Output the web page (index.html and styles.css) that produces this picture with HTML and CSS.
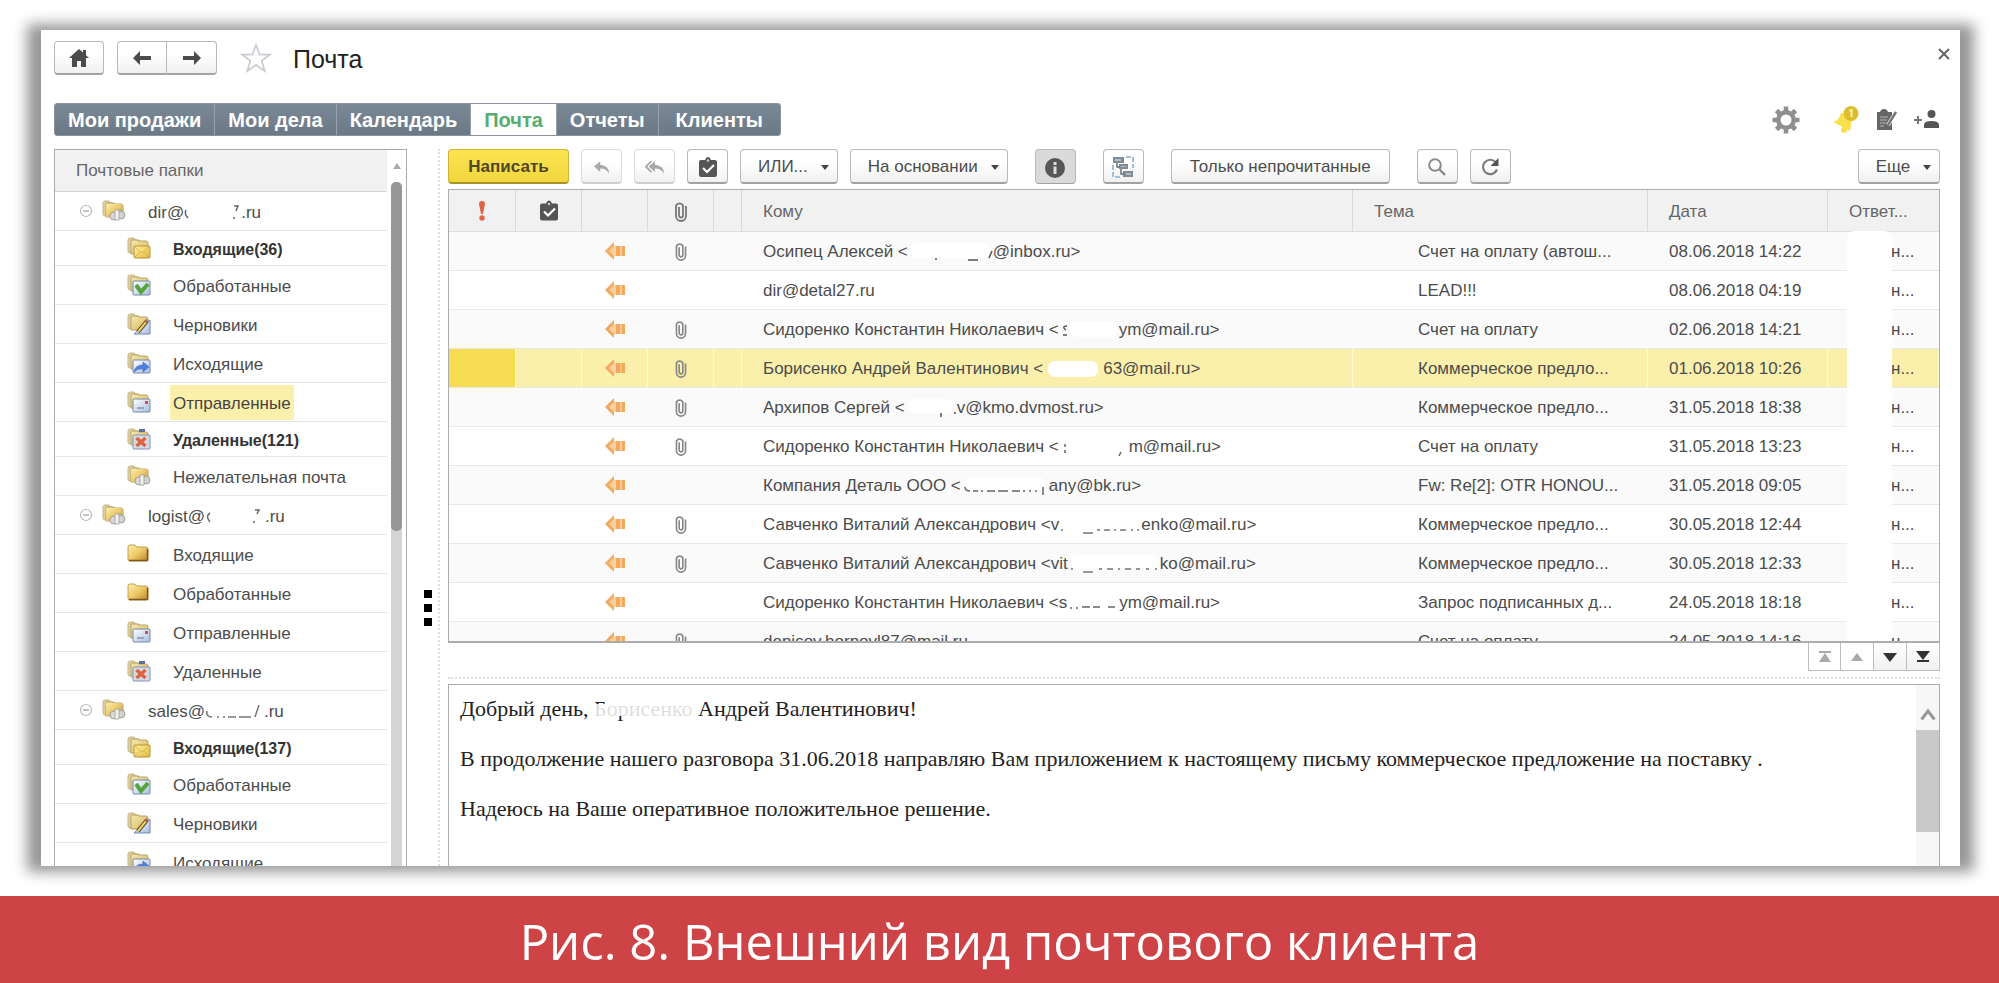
FILE: index.html
```html
<!DOCTYPE html>
<html lang="ru">
<head>
<meta charset="utf-8">
<title>Почта</title>
<link rel="stylesheet" href="styles.css">
</head>
<body>
<svg class="sprite" aria-hidden="true">
  <defs>
    <linearGradient id="gold" x1="0" y1="0" x2="1" y2="1"><stop offset="0" stop-color="#fdf0a8"/><stop offset=".5" stop-color="#efc969"/><stop offset="1" stop-color="#b98526"/></linearGradient>
    <linearGradient id="pale" x1="0" y1="0" x2="1" y2="1"><stop offset="0" stop-color="#f6e9b0"/><stop offset=".6" stop-color="#e3cb7c"/><stop offset="1" stop-color="#c9a64c"/></linearGradient>
    <linearGradient id="paper" x1="0" y1="0" x2="1" y2="1"><stop offset="0" stop-color="#ffffff"/><stop offset="1" stop-color="#a9bfe0"/></linearGradient>
    <linearGradient id="mail" x1="0" y1="0" x2="1" y2="1"><stop offset="0" stop-color="#fff3a6"/><stop offset="1" stop-color="#e2b83c"/></linearGradient>
    <symbol id="folder" viewBox="0 0 24 22"><path d="M1 4q0-2 2-2h5l2 2h9q2 0 2 2v10q0 2-2 2H3q-2 0-2-2z" fill="url(#gold)" stroke="#c0a058" stroke-width="1"/><path d="M2 17.500h18.500V6" fill="none" stroke="#7d5a1c" stroke-width="1.500"/></symbol>
    <symbol id="back" viewBox="0 0 24 22"><path d="M1 3q0-2 2-2h4l2 2h3v13H3q-2 0-2-2z" fill="#ddd0a0" stroke="#c5b88c"/><path d="M4 4q0-1 1-1h5l2 1h7q2 0 2 2v11H4z" fill="url(#pale)" stroke="#b6a367" stroke-width="1"/></symbol>
    <symbol id="f-in" viewBox="0 0 24 22"><use href="#back"/><rect x="7" y="9" width="16" height="12" rx="1" fill="url(#mail)" stroke="#b89332"/><path d="M8 10l7 6 7-6M8 20l5-5M22 20l-5-5" fill="none" stroke="#dcb84c" stroke-width="1"/></symbol>
    <symbol id="f-done" viewBox="0 0 24 22"><use href="#back"/><rect x="6" y="7" width="17" height="14" rx="1" fill="url(#paper)" stroke="#7288ae"/><path d="M9 11l5 7 7-8" fill="none" stroke="#54a63c" stroke-width="4"/></symbol>
    <symbol id="f-draft" viewBox="0 0 24 22"><use href="#back"/><path d="M23 7v14H7z" fill="url(#paper)" stroke="#6f86b4"/><path d="M20 8L11 19" stroke="#3b3a35" stroke-width="4"/><path d="M19.500 8.500L11 19" stroke="#f0cf5b" stroke-width="2.200"/><path d="M20.500 7l-2 2.500" stroke="#b5665a" stroke-width="3"/></symbol>
    <symbol id="f-out" viewBox="0 0 24 22"><use href="#back"/><rect x="6" y="8" width="17" height="13" rx="1" fill="url(#paper)" stroke="#7288ae"/><path d="M7 20q1-7 9-7v-3l6 5-6 5v-3q-5-1-9 3z" fill="#4f7fe0" stroke="#3c66c4" stroke-width=".6"/></symbol>
    <symbol id="f-sent" viewBox="0 0 24 22"><use href="#back"/><rect x="6" y="8" width="17" height="13" rx="1" fill="url(#paper)" stroke="#7288ae"/><path d="M10 17h7" stroke="#8a90a5" stroke-width="1.500"/><rect x="18" y="10" width="3" height="3" fill="#d35050"/></symbol>
    <symbol id="f-del" viewBox="0 0 24 22"><use href="#back"/><path d="M12 1h6v3h-6z" fill="#5a7097"/><rect x="6" y="7" width="17" height="14" rx="1" fill="#d3dae6" stroke="#8494b0"/><path d="M9.500 10l9 8M18.500 10l-9 8" stroke="#e0623c" stroke-width="3.400"/></symbol>
    <symbol id="f-acc" viewBox="0 0 24 22"><use href="#back"/><path d="M4 4h16v6l-6 7H4z" fill="url(#gold)" opacity=".8"/><circle cx="12" cy="16" r="4" fill="#d9d9d6" stroke="#a2a29c"/><circle cx="19" cy="15" r="4" fill="#d2d2cf" stroke="#a2a29c"/><path d="M13 10h4v10h-4z" fill="#f1f1ee" stroke="#aaa"/></symbol>
    <symbol id="minus" viewBox="0 0 14 14"><circle cx="7" cy="7" r="5.500" fill="#fff" stroke="#bbb" stroke-width="1.200"/><path d="M4 7h6" stroke="#a5a5a5" stroke-width="1.400"/></symbol>
    <symbol id="home" viewBox="0 0 20 18"><path d="M10 0L0 9h3v9h5v-6h4v6h5V9h3l-3-2.700V1h-3v2.600z" fill="#4b4b4b"/></symbol>
    <symbol id="left" viewBox="0 0 20 14"><path d="M8 0L1 7l7 7V9h11V5H8z" fill="#4b4b4b"/></symbol>
    <symbol id="right" viewBox="0 0 20 14"><path d="M12 0l7 7-7 7V9H1V5h11z" fill="#4b4b4b"/></symbol>
    <symbol id="star" viewBox="0 0 32 30"><path d="M16 2l3.600 9.700H30l-8.300 6.200 3 10.100-8.700-6.100L7.300 28l3-10.100L2 11.700h10.400z" fill="none" stroke="#c9ced3" stroke-width="1.800"/></symbol>
    <symbol id="task" viewBox="0 0 18 20"><path d="M2 3h4q1-3 3-3t3 3h4q2 0 2 2v13q0 2-2 2H2q-2 0-2-2V5q0-2 2-2z" fill="#555"/><path d="M4 11l4 4 7-7" fill="none" stroke="#fff" stroke-width="2.200"/><circle cx="9" cy="3.500" r="1.200" fill="#ccc"/></symbol>
    <symbol id="clip" viewBox="0 0 12 22"><path d="M8 6v9.500a2 2 0 0 1-4 0V7M11 6v10a5 5 0 0 1-10 0V5.500a4 4 0 0 1 7 0V15" fill="none" stroke="currentColor" stroke-width="1.800"/></symbol>
    <symbol id="bang" viewBox="0 0 8 20"><path d="M1 3a3 3 0 0 1 6 0L5 13H3z" fill="#df6546"/><circle cx="4" cy="17" r="2.700" fill="#df6546"/></symbol>
    <symbol id="sent" viewBox="0 0 20 18"><path d="M0 9l9-9v4h4v10H9v4z" fill="#f4a85c"/><path d="M4 9l5-5h2v10H9z" fill="#f9cfa0"/><path d="M12 4h3.600v10H12zM16.400 4H20v10h-3.600z" fill="#f4a85c"/></symbol>
    <symbol id="reply" viewBox="0 0 18 14"><path d="M7 0L0 6l7 6V8q7 0 10 6 0-9-10-10z" fill="#a8a8a8"/></symbol>
    <symbol id="replyall" viewBox="0 0 22 14"><path d="M11 0L4 6l7 6V8q7 0 10 6 0-9-10-10z" fill="#a8a8a8"/><path d="M7 0L1 6l6 6" fill="none" stroke="#a8a8a8" stroke-width="2"/></symbol>
    <symbol id="caret" viewBox="0 0 8 5"><path d="M0 0h8L4 5z" fill="#444"/></symbol>
    <symbol id="info" viewBox="0 0 20 20"><circle cx="10" cy="10" r="10" fill="#575757"/><path d="M10 4v3M10 8.500V16" stroke="#ddd" stroke-width="3"/></symbol>
    <symbol id="tree" viewBox="0 0 22 22"><path d="M1 9v12h8M14 1h7v11" fill="none" stroke="#9fc0d8" stroke-width="2" stroke-dasharray="5 2"/><path d="M1 1h11v6H1zM7 8h9v5H7zM11 15h10v6H11z" fill="#7f8c97"/><path d="M3 3h6v2H3zM9 10h5v1H9zM14 17h5v2h-5z" fill="#b4bec6"/><path d="M5 7v4h3M9 13v5h3" fill="none" stroke="#65727d" stroke-width="1.500"/></symbol>
    <symbol id="find" viewBox="0 0 18 18"><circle cx="7" cy="7" r="5.800" fill="none" stroke="#8a8a8a" stroke-width="2"/><path d="M11 11l6 6" stroke="#8a8a8a" stroke-width="2.400"/></symbol>
    <symbol id="reload" viewBox="0 0 18 18"><path d="M14.500 4A7.200 7.200 0 1 0 16 11.500" fill="none" stroke="#7d7d7d" stroke-width="2.200"/><path d="M17.500 0v8h-8z" fill="#555"/></symbol>
    <symbol id="gear" viewBox="0 0 28 28"><circle cx="14" cy="14" r="7.700" fill="none" stroke="#8f8f8f" stroke-width="4.400"/><g stroke="#8f8f8f" stroke-width="4.600"><path d="M14 .5V5M14 23v4.500M.5 14H5M23 14h4.500M4.500 4.500l3 3M20.500 20.500l3 3M4.500 23.500l3-3M20.500 7.500l3-3"/></g></symbol>
    <symbol id="bell" viewBox="0 0 26 27"><path d="M0 16q7-2 8-10l10 8q1 3-1 11z" fill="#fae04d"/><circle cx="11" cy="24" r="3" fill="#fae04d"/><circle cx="18" cy="7.500" r="7.500" fill="#dbbd2f"/><path d="M16.500 5l2-1v7" fill="none" stroke="#fff3a8" stroke-width="2"/></symbol>
    <symbol id="notes" viewBox="0 0 21 22"><path d="M1 3h3q1-3 4-3t4 3h4v18H1z" fill="#666"/><path d="M4 8h8M4 11h7M4 14h6M4 17h4" stroke="#b9b9b9" stroke-width="1.200"/><path d="M19.500 4L12 16" stroke="#fff" stroke-width="4"/><path d="M20 3L12 16" stroke="#777" stroke-width="2.600"/></symbol>
    <symbol id="adduser" viewBox="0 0 26 20"><path d="M0 10h8M4 6v8" stroke="#777" stroke-width="2"/><circle cx="17.500" cy="4" r="4" fill="#555"/><path d="M10 18v-3q0-4 7.500-4t7.500 4v3z" fill="#555"/></symbol>
    <symbol id="close" viewBox="0 0 12 12"><path d="M1 1l10 10M11 1L1 11" stroke="#666" stroke-width="2"/></symbol>
    <symbol id="first" viewBox="0 0 14 12"><path d="M1 0h12v2H1zM7 2l6 9H1z" fill="currentColor"/></symbol>
    <symbol id="up" viewBox="0 0 14 12"><path d="M7 2l6 8H1z" fill="currentColor"/></symbol>
    <symbol id="down" viewBox="0 0 14 12"><path d="M0 2h14L7 11z" fill="currentColor"/></symbol>
    <symbol id="last" viewBox="0 0 14 12"><path d="M0 0h14L7 9zM1 9h12v2H1z" fill="currentColor"/></symbol>
    <symbol id="chevron" viewBox="0 0 16 13"><path d="M1.500 11.500L8 3l6.500 8.500" fill="none" stroke="#9a9a9a" stroke-width="3"/></symbol>
  </defs>
</svg>

<figure class="figure">
  <div class="frame">
    <div class="window">
      <header class="titlebar">
        <button class="btn icon-btn nav-btn" aria-label="Домой"><svg width="20" height="18"><use href="#home"/></svg></button>
        <div class="history">
          <button class="btn nav-btn" aria-label="Назад"><svg width="20" height="14"><use href="#left"/></svg></button><button class="btn nav-btn" aria-label="Вперед"><svg width="20" height="14"><use href="#right"/></svg></button>
        </div>
        <button class="plain star" aria-label="В избранное"><svg width="32" height="30"><use href="#star"/></svg></button>
        <h1 class="title">Почта</h1>
        <button class="plain close" aria-label="Закрыть"><svg width="12" height="12"><use href="#close"/></svg></button>
      </header>

      <div class="menubar">
        <nav class="tabs">
          <a href="#">Мои продажи</a><a href="#">Мои дела</a><a href="#">Календарь</a><a href="#" class="active" aria-current="page">Почта</a><a href="#">Отчеты</a><a href="#">Клиенты</a>
        </nav>
        <div class="tools">
          <button class="plain gear" aria-label="Настройки"><svg width="28" height="28"><use href="#gear"/></svg></button>
          <button class="plain" aria-label="Уведомления"><svg width="26" height="27"><use href="#bell"/></svg></button>
          <button class="plain" aria-label="Заметки"><svg width="21" height="22"><use href="#notes"/></svg></button>
          <button class="plain" aria-label="Добавить пользователя"><svg width="26" height="20"><use href="#adduser"/></svg></button>
        </div>
      </div>

      <div class="main">
        <aside class="folders">
          <div class="tree">
            <h2 class="tree-head">Почтовые папки</h2>
            <ul class="tree-list">
              <li class="account"><button class="plain" aria-label="Свернуть"><svg width="14" height="14"><use href="#minus"/></svg></button><svg width="24" height="22"><use href="#f-acc"/></svg><a href="#">dir@<svg class="redact" width="57" height="18"><path d="M2 6q-2 4 2 8M50 2h4l-2 5M50 13v2" stroke="#666" stroke-width="1.500" fill="none"/></svg>.ru</a></li>
              <li class="unread"><svg width="24" height="22"><use href="#f-in"/></svg><a href="#">Входящие(36)</a></li>
              <li><svg width="24" height="22"><use href="#f-done"/></svg><a href="#">Обработанные</a></li>
              <li><svg width="24" height="22"><use href="#f-draft"/></svg><a href="#">Черновики</a></li>
              <li><svg width="24" height="22"><use href="#f-out"/></svg><a href="#">Исходящие</a></li>
              <li class="current"><svg width="24" height="22"><use href="#f-sent"/></svg><a href="#">Отправленные</a></li>
              <li class="unread"><svg width="24" height="22"><use href="#f-del"/></svg><a href="#">Удаленные(121)</a></li>
              <li><svg width="24" height="22"><use href="#f-acc"/></svg><a href="#">Нежелательная почта</a></li>
              <li class="account"><button class="plain" aria-label="Свернуть"><svg width="14" height="14"><use href="#minus"/></svg></button><svg width="24" height="22"><use href="#f-acc"/></svg><a href="#">logist@<svg class="redact" width="60" height="18"><path d="M5 5q-5 3 0 9M50 2h4l-2 4M49 13v2" stroke="#666" stroke-width="1.500" fill="none"/></svg>.ru</a></li>
              <li><svg width="24" height="22"><use href="#folder"/></svg><a href="#">Входящие</a></li>
              <li><svg width="24" height="22"><use href="#folder"/></svg><a href="#">Обработанные</a></li>
              <li><svg width="24" height="22"><use href="#f-sent"/></svg><a href="#">Отправленные</a></li>
              <li><svg width="24" height="22"><use href="#f-del"/></svg><a href="#">Удаленные</a></li>
              <li class="account"><button class="plain" aria-label="Свернуть"><svg width="14" height="14"><use href="#minus"/></svg></button><svg width="24" height="22"><use href="#f-acc"/></svg><a href="#">sales@<svg class="redact" width="59" height="18"><path d="M2 8q-1 6 5 6M12 14h2M18 14h2M23 14h8M34 14h12M54 2l-4 12" stroke="#777" stroke-width="1.500" fill="none"/></svg>.ru</a></li>
              <li class="unread"><svg width="24" height="22"><use href="#f-in"/></svg><a href="#">Входящие(137)</a></li>
              <li><svg width="24" height="22"><use href="#f-done"/></svg><a href="#">Обработанные</a></li>
              <li><svg width="24" height="22"><use href="#f-draft"/></svg><a href="#">Черновики</a></li>
              <li><svg width="24" height="22"><use href="#f-out"/></svg><a href="#">Исходящие</a></li>
            </ul>
          </div>
          <div class="tree-scroll"><svg width="8" height="6"><path d="M4 0l4 6H0z" fill="#aaa"/></svg><div class="track"><div class="thumb"></div></div></div>
        </aside>

        <div class="splitter"><i></i><i></i><i></i></div>

        <section class="mail">
          <div class="toolbar">
            <button class="btn primary">Написать</button>
            <button class="btn icon-btn faded" aria-label="Ответить"><svg width="16" height="13"><use href="#reply"/></svg></button>
            <button class="btn icon-btn faded" aria-label="Ответить всем"><svg width="20" height="13"><use href="#replyall"/></svg></button>
            <button class="btn icon-btn" aria-label="Задача"><svg width="18" height="20"><use href="#task"/></svg></button>
            <button class="btn menu">ИЛИ...<svg width="8" height="5"><use href="#caret"/></svg></button>
            <button class="btn menu">На основании<svg width="8" height="5"><use href="#caret"/></svg></button>
            <button class="btn icon-btn pressed apart" aria-label="Информация"><svg width="20" height="20"><use href="#info"/></svg></button>
            <button class="btn icon-btn apart" aria-label="Дерево"><svg width="22" height="22"><use href="#tree"/></svg></button>
            <button class="btn wide apart">Только непрочитанные</button>
            <button class="btn icon-btn apart" aria-label="Найти"><svg width="18" height="18"><use href="#find"/></svg></button>
            <button class="btn icon-btn" aria-label="Обновить"><svg width="18" height="18"><use href="#reload"/></svg></button>
            <button class="btn menu more">Еще<svg width="8" height="5"><use href="#caret"/></svg></button>
          </div>

          <div class="list">
            <table class="letters">
              <colgroup><col class="c-flag"><col class="c-icon"><col class="c-icon"><col class="c-icon"><col class="c-gap"><col><col class="c-subject"><col class="c-date"><col class="c-owner"></colgroup>
              <thead>
                <tr><th><svg width="8" height="20"><use href="#bang"/></svg></th><th><svg width="18" height="21"><use href="#task"/></svg></th><th></th><th><svg class="clip" width="12" height="22"><use href="#clip"/></svg></th><th></th><th class="t">Кому</th><th class="t">Тема</th><th class="t">Дата</th><th class="t">Ответ...</th></tr>
              </thead>
              <tbody>
                <tr><td></td><td></td><td><svg width="20" height="18"><use href="#sent"/></svg></td><td><svg class="clip" width="12" height="20"><use href="#clip"/></svg></td><td></td><td class="t">Осипец Алексей &lt;<svg class="redact" width="85" height="18"><rect x="2" width="80" height="15" rx="7" fill="#fff"/><path d="M28 15v2M60 17h10M84 8l-3 7" stroke="#555" stroke-width="1.500"/></svg>@inbox.ru&gt;</td><td class="t s">Счет на оплату (автош...</td><td class="t">08.06.2018 14:22</td><td class="t o">н...</td></tr>
                <tr><td></td><td></td><td><svg width="20" height="18"><use href="#sent"/></svg></td><td></td><td></td><td class="t">dir@detal27.ru</td><td class="t s">LEAD!!!</td><td class="t">08.06.2018 04:19</td><td class="t o">н...</td></tr>
                <tr><td></td><td></td><td><svg width="20" height="18"><use href="#sent"/></svg></td><td><svg class="clip" width="12" height="20"><use href="#clip"/></svg></td><td></td><td class="t">Сидоренко Константин Николаевич &lt;<svg class="redact" width="60" height="18"><rect x="10" width="48" height="16" rx="7" fill="#fff"/><path d="M8 5q-4 0-3 2t2 2M4 14h4" stroke="#555" stroke-width="1.500" fill="none"/></svg>ym@mail.ru&gt;</td><td class="t s">Счет на оплату</td><td class="t">02.06.2018 14:21</td><td class="t o">н...</td></tr>
                <tr class="selected"><td></td><td></td><td><svg width="20" height="18"><use href="#sent"/></svg></td><td><svg class="clip" width="12" height="20"><use href="#clip"/></svg></td><td></td><td class="t">Борисенко Андрей Валентинович &lt;<svg class="redact" width="60" height="18"><rect x="5" y="1" width="50" height="16" rx="7" fill="#fff"/></svg>63@mail.ru&gt;</td><td class="t s">Коммерческое предло...</td><td class="t">01.06.2018 10:26</td><td class="t o">н...</td></tr>
                <tr><td></td><td></td><td><svg width="20" height="18"><use href="#sent"/></svg></td><td><svg class="clip" width="12" height="20"><use href="#clip"/></svg></td><td></td><td class="t">Архипов Сергей &lt;<svg class="redact" width="52" height="18"><rect x="3" width="45" height="14" rx="7" fill="#fff"/><path d="M36 14v4M49 14h2" stroke="#555" stroke-width="1.500"/></svg>v@kmo.dvmost.ru&gt;</td><td class="t s">Коммерческое предло...</td><td class="t">31.05.2018 18:38</td><td class="t o">н...</td></tr>
                <tr><td></td><td></td><td><svg width="20" height="18"><use href="#sent"/></svg></td><td><svg class="clip" width="12" height="20"><use href="#clip"/></svg></td><td></td><td class="t">Сидоренко Константин Николаевич &lt;<svg class="redact" width="70" height="18"><path d="M6 6v3M6 12v3M62 14l-2 4" stroke="#666" stroke-width="1.500"/></svg>m@mail.ru&gt;</td><td class="t s">Счет на оплату</td><td class="t">31.05.2018 13:23</td><td class="t o">н...</td></tr>
                <tr><td></td><td></td><td><svg width="20" height="18"><use href="#sent"/></svg></td><td></td><td></td><td class="t">Компания Деталь ООО &lt;<svg class="redact" width="88" height="18"><rect x="4" width="80" height="13" rx="7" fill="#fff"/><path d="M4 10q0 4 5 4M12 14h5M20 14h2M26 14h8M37 14h10M51 14h8M62 14h2M68 14h2M74 14h2M82 10v8" stroke="#666" stroke-width="1.500" fill="none"/></svg>any@bk.ru&gt;</td><td class="t s">Fw: Re[2]: OTR HONOU...</td><td class="t">31.05.2018 09:05</td><td class="t o">н...</td></tr>
                <tr><td></td><td></td><td><svg width="20" height="18"><use href="#sent"/></svg></td><td><svg class="clip" width="12" height="20"><use href="#clip"/></svg></td><td></td><td class="t">Савченко Виталий Александрович &lt;v<svg class="redact" width="82" height="18"><path d="M2 14h2M24 17h10M38 14h3M45 14h6M55 14h2M61 14h6M72 14h2M78 14h2" stroke="#777" stroke-width="1.500"/></svg>enko@mail.ru&gt;</td><td class="t s">Коммерческое предло...</td><td class="t">30.05.2018 12:44</td><td class="t o">н...</td></tr>
                <tr><td></td><td></td><td><svg width="20" height="18"><use href="#sent"/></svg></td><td><svg class="clip" width="12" height="20"><use href="#clip"/></svg></td><td></td><td class="t">Савченко Виталий Александрович &lt;vit<svg class="redact" width="92" height="18"><rect x="3" width="88" height="13" rx="6" fill="#fff"/><path d="M3 14h2M15 17h10M31 14h3M39 14h6M50 14h2M57 14h6M68 14h4M78 14h3M87 14h2" stroke="#777" stroke-width="1.500"/></svg>ko@mail.ru&gt;</td><td class="t s">Коммерческое предло...</td><td class="t">30.05.2018 12:33</td><td class="t o">н...</td></tr>
                <tr><td></td><td></td><td><svg width="20" height="18"><use href="#sent"/></svg></td><td></td><td></td><td class="t">Сидоренко Константин Николаевич &lt;s<svg class="redact" width="52" height="18"><path d="M3 14h2M9 14h2M15 13h8M26 13h7M41 13h7" stroke="#666" stroke-width="1.500"/></svg>ym@mail.ru&gt;</td><td class="t s">Запрос подписанных д...</td><td class="t">24.05.2018 18:18</td><td class="t o">н...</td></tr>
                <tr><td></td><td></td><td><svg width="20" height="18"><use href="#sent"/></svg></td><td><svg class="clip" width="12" height="20"><use href="#clip"/></svg></td><td></td><td class="t">denisov.hornovl87@mail.ru</td><td class="t s">Счет на оплату</td><td class="t">24.05.2018 14:16</td><td class="t o">н...</td></tr>
              </tbody>
            </table>
            <div class="owner-mask"></div>
          </div>

          <div class="pager">
            <button aria-label="В начало" disabled><svg width="14" height="12"><use href="#first"/></svg></button><button aria-label="Вверх" disabled><svg width="14" height="12"><use href="#up"/></svg></button><button aria-label="Вниз"><svg width="14" height="12"><use href="#down"/></svg></button><button aria-label="В конец"><svg width="14" height="12"><use href="#last"/></svg></button>
          </div>

          <article class="letter">
            <div class="letter-text">
              <p>Добрый день, <span class="erased">Борисенко</span> Андрей Валентинович!</p>
              <p>В продолжение нашего разговора 31.06.2018 направляю Вам приложением к настоящему письму коммерческое предложение на поставку .</p>
              <p>Надеюсь на Ваше оперативное положительное решение.</p>
            </div>
            <div class="letter-scroll"><svg width="16" height="13"><use href="#chevron"/></svg><div class="letter-thumb"></div></div>
          </article>
        </section>
      </div>
    </div>
  </div>
  <figcaption class="caption">Рис. 8. Внешний вид почтового клиента</figcaption>
</figure>
</body>
</html>
```
FILE: styles.css
```css
* { box-sizing: border-box; }

body {
  margin: 0;
  background: #fff;
  color: #4c4c4c;
  font: 17px/20px "Liberation Sans", Arial, sans-serif;
}

a { color: inherit; text-decoration: none; }
button { font: inherit; color: inherit; margin: 0; cursor: pointer; }
svg { display: block; flex: none; }
.sprite { position: absolute; width: 0; height: 0; }
.plain { padding: 0; border: 0; background: none; }

/* figure with shadowed frame */
.figure { display: flex; flex-direction: column; height: 100vh; margin: 0; }
.frame { position: relative; isolation: isolate; flex: 1; min-height: 0; margin: 30px 39px 30px 41px; }
.frame::before {
  content: "";
  position: absolute;
  inset: -6px -14px;
  z-index: -1;
  background: #969696;
  filter: blur(7px);
}
.window { display: flex; flex-direction: column; height: 100%; overflow: hidden; background: #fff; }
.caption {
  flex: none;
  padding: 10px 0 7px;
  background: #ce4446;
  color: #fff;
  font: 49px/70px "Open Sans", "Noto Sans", sans-serif;
  text-align: center;
}

/* buttons */
.btn {
  display: flex;
  align-items: center;
  justify-content: center;
  height: 35px;
  padding: 2px 18px 0;
  border: 1px solid #b9b9b9;
  border-bottom: 2px solid #a2a2a2;
  border-radius: 4px;
  background: linear-gradient(#fff 40%, #f0f0f0);
  white-space: nowrap;
}
.icon-btn { width: 41px; padding: 2px 0 0; }
.faded { border-color: #dcdcdc #dcdcdc #cfcfcf; }
.pressed { background: #dadada; border-width: 1px; }
.primary {
  width: 121px;
  padding: 2px 0 0;
  border-color: #cdb435 #cdb435 #a8922a;
  background: linear-gradient(#fce552, #f2d63f);
  color: #50482a;
  font-weight: bold;
}
.menu { gap: 13px; padding: 2px 8px 0 17px; }
.wide { width: 219px; padding: 2px 0 0; }
.apart { margin-left: 15px; }
.more { width: 82px; margin-left: auto; }

/* title */
.titlebar { display: flex; align-items: center; padding: 11px 10px 0 13px; }
.nav-btn { width: 50px; height: 34px; padding: 0; }
.history { display: flex; margin: 0 23px 0 13px; }
.history .btn:first-child { border-radius: 4px 0 0 4px; }
.history .btn:last-child { border-left: 0; border-radius: 0 4px 4px 0; }
.title { margin: 2px 0 0 21px; color: #222; font-size: 25px; line-height: 28px; font-weight: normal; }
.close { align-self: flex-start; margin: 7px 0 0 auto; }

/* section tabs */
.menubar { display: flex; justify-content: space-between; padding: 28px 20px 13px 13px; }
.tabs {
  display: flex;
  height: 33px;
  border: 1px solid #8a939c;
  border-radius: 3px;
  background: linear-gradient(#7b8997, #6b7986);
  color: #fff;
  font-size: 20px;
  line-height: 32px;
  font-weight: bold;
}
.tabs a { padding: 0 13px; border-right: 1px solid #98a2ac; }
.tabs a:last-child { padding: 0 17px; border-right: 0; }
.tabs .active { background: #fff; color: #57ad6f; }
.tools { display: flex; align-items: center; gap: 17px; }
.gear { margin-right: 16px; }

/* main area */
.main { display: flex; flex: 1; min-height: 0; padding: 0 20px 0 13px; }

.folders { display: flex; flex: none; width: 353px; border: 1px solid #ababab; border-width: 1px 1px 0; overflow: hidden; }
.tree { flex: 1; min-width: 0; }
.tree-head { height: 42px; margin: 0; padding: 0 21px; background: #f1f1f1; border-bottom: 1px solid #d6d6d6; font-size: 17px; line-height: 41px; font-weight: normal; color: #666; }
.tree-list { margin: 0; padding: 0; list-style: none; }
.tree-list li { display: flex; align-items: center; gap: 19px; height: 39px; padding-left: 72px; border-bottom: 1px solid #e6e6e6; }
.tree-list .account { padding-left: 24px; gap: 9px; }
.tree-list .account a { margin-left: 10px; }
.tree-list .unread { height: 35px; color: #333; font-size: 16px; font-weight: bold; }
.tree-list a { padding: 2px 3px 0; line-height: 33px; white-space: nowrap; }
.tree-list .current a { background: #fbf0ab; color: #444; }
.tree-scroll { display: flex; flex-direction: column; align-items: center; gap: 13px; flex: none; width: 19px; padding-top: 13px; }
.track { flex: 1; width: 11px; border-radius: 5px 5px 0 0; background: #d5d5d5; }
.thumb { height: 51%; border-radius: 5px; background: #979797; }

.redact { display: inline-block; vertical-align: -4px; }

.splitter {
  display: flex;
  flex-direction: column;
  align-items: center;
  justify-content: center;
  gap: 6px;
  flex: none;
  width: 33px;
  padding: 200px 0 0 11px;
  border-right: 2px dotted #ddd;
}
.splitter i { width: 8px; height: 8px; background: #000; }

.mail { display: flex; flex-direction: column; flex: 1; min-width: 0; margin-left: 8px; }
.toolbar { display: flex; flex: none; gap: 12px; padding-bottom: 5px; }

/* letter list */
.list { position: relative; flex: 5 1 0; min-height: 0; overflow: hidden; border: 1px solid #adadad; border-bottom-width: 2px; }
.letters { width: 100%; table-layout: fixed; border-collapse: separate; border-spacing: 0; }
.c-flag { width: 67px; }
.c-icon { width: 66px; }
.c-gap { width: 28px; }
.c-subject { width: 295px; }
.c-date { width: 180px; }
.c-owner { width: 111px; }
.letters th { height: 42px; padding: 0; background: #f1f1f1; border-right: 1px solid #d9d9d9; border-bottom: 1px solid #dedede; color: #666; font-weight: normal; }
.letters td { height: 39px; padding: 0; border-bottom: 1px solid #e8e8e8; }
.letters th:last-child { border-right: 0; }
.letters th svg, .letters td > svg:not(.redact) { margin: 0 auto; }
.letters .t { padding: 2px 0 0 21px; text-align: left; white-space: nowrap; overflow: hidden; }
.letters .s { padding-left: 65px; }
.letters .o { padding-left: 63px; }
.letters tbody tr:nth-child(odd) { background: #fafafa; }
.clip { color: #888; }
.letters th .clip { color: #777; }
.letters tbody .selected { background: #faf0ab; }
.letters .selected td { border-right: 1px solid #fdf8d8; }
.letters .selected td:first-child { background: #f6dc50; }
.owner-mask { position: absolute; top: 41px; right: 47px; bottom: 0; width: 45px; border-radius: 8px 8px 0 0; background: #fff; }

.pager { display: flex; flex: none; align-self: stretch; justify-content: flex-end; padding-bottom: 6px; border-bottom: 2px dotted #e0e0e0; margin-bottom: 5px; }
.pager button { display: flex; align-items: center; justify-content: center; width: 33px; height: 28px; padding: 0; border: 1px solid #bdbdbd; border-width: 0 1px 1px 0; background: linear-gradient(#fff, #f0f0f0); color: #333; }
.pager button:first-child { border-left-width: 1px; }
.pager button:disabled { background: #fff; color: #aaa; }

/* letter preview */
.letter { display: flex; flex: 2 1 0; min-height: 0; overflow: hidden; border: 1px solid #adadad; border-bottom: 0; color: #222; font: 22px/25px "Liberation Serif", "Times New Roman", serif; }
.letter-text { flex: 1; min-width: 0; padding: 11px; }
.letter-text p { margin: 0 0 25px; }
.erased { position: relative; }
.erased::after { content: ""; position: absolute; inset: 8px 0 5px; background: rgba(255, 255, 255, .85); }
.letter-scroll { display: flex; flex-direction: column; align-items: center; gap: 9px; flex: none; width: 23px; padding-top: 23px; background: #f7f7f7; }
.letter-thumb { width: 100%; height: 102px; background: #c9c9c9; }
```
